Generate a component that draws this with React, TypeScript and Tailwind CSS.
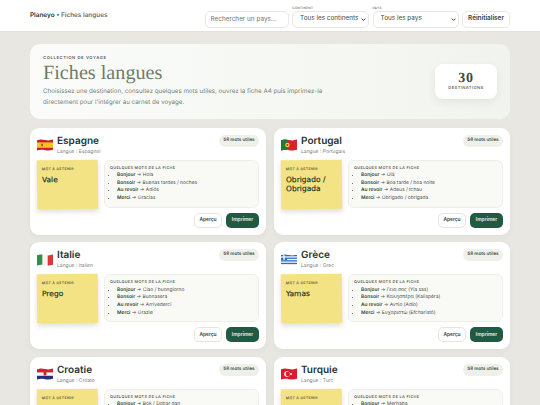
const cards = [
  { name: "Espagne", lang: "Espagnol", flag: "es", word: "Vale", lines: ["Hola", "Buenas tardes / noches", "Adiós", "Gracias"] },
  { name: "Portugal", lang: "Portugais", flag: "pt", word: "Obrigado / Obrigada", lines: ["Olá", "Boa tarde / boa noite", "Adeus / tchau", "Obrigado / obrigada"] },
  { name: "Italie", lang: "Italien", flag: "it", word: "Prego", lines: ["Ciao / buongiorno", "Buonasera", "Arrivederci", "Grazie"] },
  { name: "Grèce", lang: "Grec", flag: "gr", word: "Yamas", lines: ["Γεια σας (Yia sas)", "Καλησπέρα (Kalispéra)", "Αντίο (Adío)", "Ευχαριστώ (Efcharistó)"] },
  { name: "Croatie", lang: "Croate", flag: "hr", word: "Hvala", lines: ["Bok / Dobar dan", "Dobra večer", "Doviđenja", "Hvala"] },
  { name: "Turquie", lang: "Turc", flag: "tr", word: "Merhaba", lines: ["Merhaba", "İyi akşamlar", "Hoşça kal", "Teşekkürler"] },
]

const labels = ["Bonjour", "Bonsoir", "Au revoir", "Merci"]

function Flag({ code }: { code: string }) {
  return (
    <svg viewBox="0 0 16 12" className="w-[16px] h-[12px] shrink-0">
      <defs>
        <clipPath id={`wave-${code}`}>
          <path d="M0 1.2C3 .2 5 .4 8 1s5 .6 8-.4v10.2c-3 1-5 1-8 .4s-5-.6-8 .4z" />
        </clipPath>
      </defs>
      <g clipPath={`url(#wave-${code})`}>
        {code === "es" && (
          <>
            <rect width="16" height="12" fill="#c8202c" />
            <rect y="3.4" width="16" height="5.4" fill="#f6c324" />
            <rect x="4" y="4.8" width="2" height="2.4" fill="#b5562c" />
          </>
        )}
        {code === "pt" && (
          <>
            <rect width="16" height="12" fill="#d8232a" />
            <rect width="6.4" height="12" fill="#1f7a36" />
            <circle cx="6.4" cy="6" r="2.2" fill="#f5d33c" />
            <circle cx="6.4" cy="6" r="1.1" fill="#d8232a" />
          </>
        )}
        {code === "it" && (
          <>
            <rect width="16" height="12" fill="#f4f4f2" />
            <rect width="5.3" height="12" fill="#2f8f4e" />
            <rect x="10.7" width="5.3" height="12" fill="#d9363e" />
          </>
        )}
        {code === "gr" && (
          <>
            <rect width="16" height="12" fill="#f6f8fb" />
            <rect y="1" width="16" height="1.3" fill="#2f6fc0" />
            <rect y="3.6" width="16" height="1.3" fill="#2f6fc0" />
            <rect y="6.2" width="16" height="1.3" fill="#2f6fc0" />
            <rect y="8.8" width="16" height="1.3" fill="#2f6fc0" />
            <rect width="6" height="6" fill="#2f6fc0" />
            <rect x="2.4" width="1.2" height="6" fill="#fff" />
            <rect y="2.4" width="6" height="1.2" fill="#fff" />
          </>
        )}
        {code === "hr" && (
          <>
            <rect width="16" height="12" fill="#f6f6f6" />
            <rect width="16" height="4.4" fill="#d5222d" />
            <rect y="7.8" width="16" height="4.2" fill="#232f7e" />
            <rect x="6.6" y="4" width="2.8" height="3.4" fill="#d5222d" />
          </>
        )}
        {code === "tr" && (
          <>
            <rect width="16" height="12" fill="#dc1c2e" />
            <circle cx="6" cy="6" r="2.8" fill="#fff" />
            <circle cx="6.8" cy="6" r="2.2" fill="#dc1c2e" />
            <circle cx="10" cy="6" r="1" fill="#fff" />
          </>
        )}
      </g>
    </svg>
  )
}

function Select({ width, label, value }: { width: string; label: string; value: string }) {
  return (
    <label className="block mb-[4px]">
      <span className="block text-[3.2px] leading-[5px] tracking-[0.08em] font-semibold uppercase text-[#6f746f]">{label}</span>
      <span className={`relative block ${width}`}>
        <select className="block appearance-none w-full h-[17px] rounded-[5px] border border-[#e8e7e2] bg-white pl-[7px] text-[6.4px] text-[#444a46]">
          <option>{value}</option>
        </select>
        <svg viewBox="0 0 8 8" className="absolute right-[3px] top-[6px] w-[5px] h-[5px]" fill="none" stroke="#3f4541" strokeWidth="1.6">
          <path d="M1 2.5 4 5.5 7 2.5" />
        </svg>
      </span>
    </label>
  )
}

function Card({ item }: { item: (typeof cards)[number] }) {
  return (
    <div className="bg-white rounded-[9px] h-[107px] px-[7px] pt-[7px] shadow-[0_2px_6px_rgba(60,60,50,0.05)]">
      <div className="flex items-start justify-between h-[24px]">
        <div className="flex items-center gap-[4px]">
          <Flag code={item.flag} />
          <div>
            <div className="text-[10px] leading-[12px] font-semibold text-[#26352e]">{item.name}</div>
            <div className="text-[5px] leading-[8px] mt-[1px] text-[#7d817d]">Langue : {item.lang}</div>
          </div>
        </div>
        <span className="bg-[#edf1ea] rounded-full h-[12px] w-[40px] text-center text-[4.6px] leading-[12px] font-semibold text-[#3f4b45]">58 mots utiles</span>
      </div>
      <div className="flex gap-[6px] mt-[1px]">
        <div className="w-[61px] h-[49px] shrink-0 -rotate-[0.7deg] bg-[#f4e384] shadow-[0_3px_5px_rgba(90,80,30,0.18)] px-[5px] pt-[6px]">
          <div className="text-[3.6px] leading-[6px] font-semibold tracking-[0.09em] uppercase text-[#5d5a36]">Mot à retenir</div>
          <div className="mt-[3px] text-[7.5px] leading-[9px] text-[#16301f] [-webkit-text-stroke:0.15px_#16301f] font-['DejaVu_Sans',sans-serif]">{item.word}</div>
        </div>
        <div className="flex-1 h-[48px] rounded-[6px] border border-[#efefea] bg-[#f9f9f6] px-[5px] pt-[4px]">
          <div className="text-[3.8px] leading-[6px] font-semibold tracking-[0.09em] uppercase text-[#555b55]">Quelques mots de la fiche</div>
          <ul className="mt-[1.5px] pl-[7px] list-disc text-[4.9px] leading-[7.7px] text-[#4a524c]">
            {labels.map((label, i) => (
              <li key={label}>
                <strong className="font-semibold text-[#2b4a3b]">{label}</strong> → {item.lines[i]}
              </li>
            ))}
          </ul>
        </div>
      </div>
      <div className="flex justify-end gap-[4px] mt-[4px]">
        <button className="w-[28px] h-[15px] rounded-[5px] border border-[#e6e6e0] bg-white text-[4.9px] font-semibold text-[#3a3f3b]">Aperçu</button>
        <button className="w-[33px] h-[15px] rounded-[5px] bg-[#1f5a42] text-[4.9px] font-semibold text-[#e9f1ec]">Imprimer</button>
      </div>
    </div>
  )
}

export default function App() {
  return (
    <div className="h-[405px] overflow-hidden bg-[#e8e7e1] font-['Inter',sans-serif] [text-rendering:geometricPrecision]">
      <header className="h-[32px] bg-white border-b border-[#e2e1db] px-[30px] flex items-center justify-between">
        <div className="text-[6.4px] font-semibold text-[#6a716c]">
          <span className="text-[#2b332e]">Planeyo</span> • Fiches langues
        </div>
        <div className="flex items-end gap-[3.5px] h-[32px]">
          <input
            placeholder="Rechercher un pays..."
            className="w-[84px] h-[17px] mb-[4px] rounded-[5px] border border-[#e8e7e2] bg-white px-[5px] text-[6.4px] placeholder:text-[#727773]"
          />
          <Select width="w-[77px]" label="Continent" value="Tous les continents" />
          <Select width="w-[86px]" label="Pays" value="Tous les pays" />
          <button className="w-[48px] h-[17px] mb-[4px] rounded-[5px] border border-[#e8e7e2] bg-white text-[6.4px] font-semibold text-[#3a3f3b]">Réinitialiser</button>
        </div>
      </header>
      <main className="px-[30px] pt-[12px]">
        <section className="h-[75px] rounded-[10px] bg-gradient-to-r from-[#fbfcfa] to-[#f1f4ee] px-[13px] flex items-center justify-between">
          <div className="w-[300px]">
            <div className="text-[4.2px] leading-[6px] font-semibold tracking-[0.14em] uppercase text-[#5b605b]">Collection de voyage</div>
            <h1 className="text-[20.2px] leading-[22px] text-[#6f7b6a] font-['Liberation_Serif',serif]">Fiches langues</h1>
            <p className="mt-[2px] text-[6.2px] leading-[11px] text-[#767b76]">
              Choisissez une destination, consultez quelques mots utiles, ouvrez la fiche A4 puis imprimez-la directement pour l'intégrer au carnet de voyage.
            </p>
          </div>
          <div className="w-[62px] h-[35px] rounded-[8px] bg-white shadow-[0_3px_8px_rgba(60,60,50,0.08)] flex flex-col items-center justify-center">
            <div className="text-[14px] leading-[13px] tracking-[0.05em] font-bold text-[#3d4a40] font-['Liberation_Serif',serif]">30</div>
            <div className="text-[4.1px] leading-[6px] font-semibold tracking-[0.1em] uppercase text-[#6a6f6a]">Destinations</div>
          </div>
        </section>
        <div className="grid grid-cols-2 gap-x-[8px] gap-y-[7.5px] mt-[8.5px]">
          {cards.map((item) => (
            <Card key={item.name} item={item} />
          ))}
        </div>
      </main>
    </div>
  )
}
